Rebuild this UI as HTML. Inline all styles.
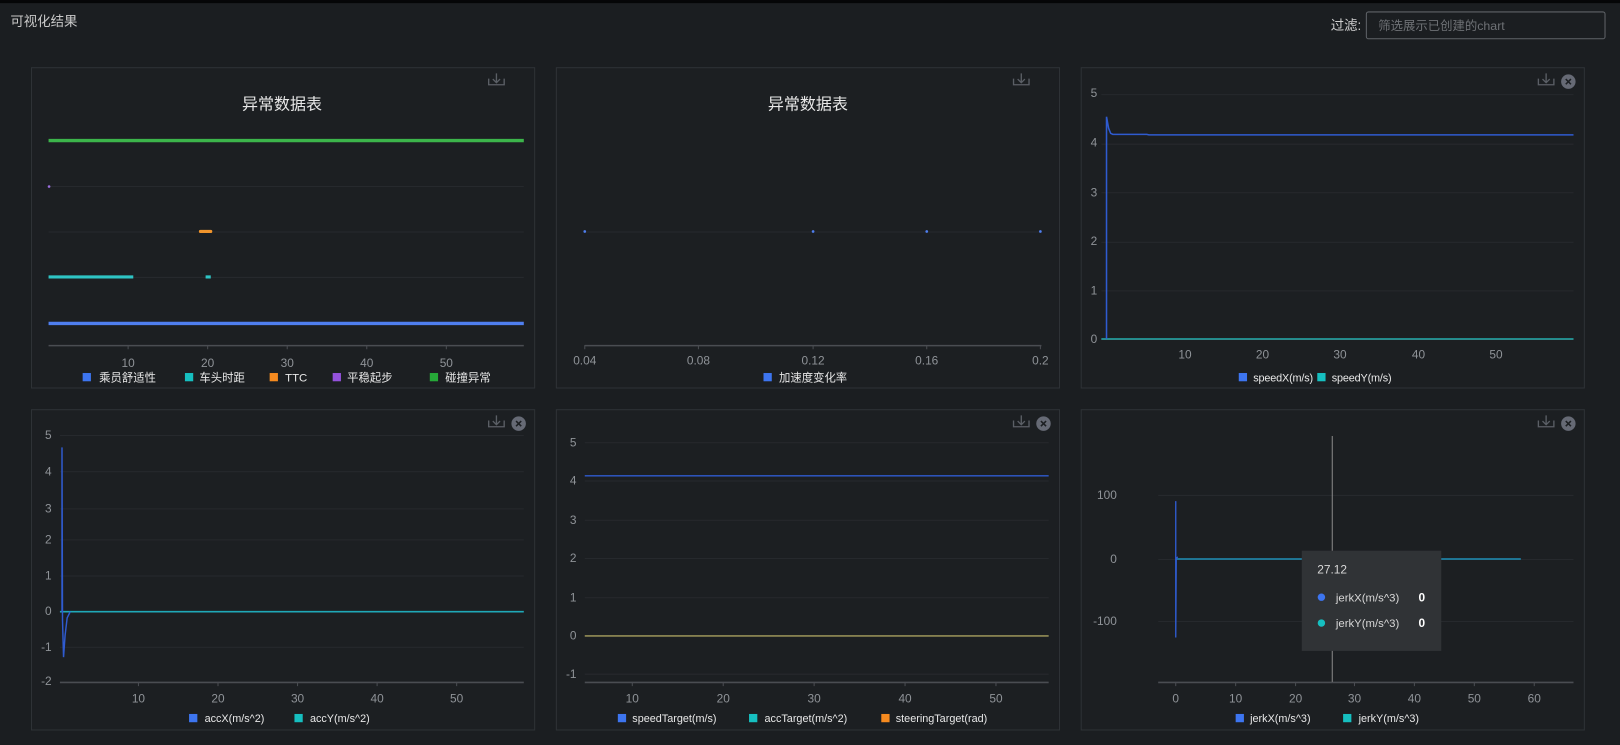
<!DOCTYPE html>
<html><head><meta charset="utf-8"><style>
html,body{margin:0;padding:0;background:#1b1e21;overflow:hidden}
svg{display:block;font-family:"Liberation Sans","Noto Sans CJK SC",sans-serif}
</style></head><body>
<svg width="1620" height="745" viewBox="0 0 1568 721" xmlns="http://www.w3.org/2000/svg">
<rect width="1568" height="721" fill="#1b1e21"/>
<rect width="1568" height="3" fill="#050607"/>
<text x="10" y="25" font-size="13" fill="#c8c8c8">可视化结果</text>
<text x="1288" y="29" font-size="13" fill="#d0d0d0">过滤:</text>
<rect x="1322.5" y="11.5" width="231" height="26" rx="2" fill="#1b1e21" stroke="#5f6368"/>
<text x="1334" y="29" font-size="12" fill="#6e7175">筛选展示已创建的chart</text>

<g fill="#1c1f22" stroke="#2e3236">
<rect x="30.5" y="65.5" width="487" height="310"/>
<rect x="538.5" y="65.5" width="487" height="310"/>
<rect x="1046.5" y="65.5" width="487" height="310"/>
<rect x="30.5" y="396.5" width="487" height="310"/>
<rect x="538.5" y="396.5" width="487" height="310"/>
<rect x="1046.5" y="396.5" width="487" height="310"/>
</g>

<defs>
<g id="dl" fill="none" stroke="#5b5f66" stroke-width="1.3"><path d="M0 5v6h15V5M7.5 0v9M4 5.5l3.5 3.5 3.5-3.5"/></g>
<g id="cl"><circle cx="0" cy="0" r="7" fill="#666a75"/><path d="M-2.5-2.5l5 5M2.5-2.5l-5 5" stroke="#1c1f22" stroke-width="1.5"/></g>
</defs>
<use href="#dl" x="473" y="71"/>
<use href="#dl" x="981" y="71"/>
<use href="#dl" x="1489" y="71"/><use href="#cl" x="1518" y="79"/>
<use href="#dl" x="473" y="402"/><use href="#cl" x="502" y="410"/>
<use href="#dl" x="981" y="402"/><use href="#cl" x="1010" y="410"/>
<use href="#dl" x="1489" y="402"/><use href="#cl" x="1518" y="410"/>

<g font-size="11.5" fill="#8f9398">
<!-- P1 -->
<text x="273" y="106" font-size="15.5" fill="#e8e8e8" text-anchor="middle">异常数据表</text>
<g stroke="#26292d"><path d="M47 180.5h460M47 224.5h460M47 268.5h460"/></g>
<path d="M47 334.5h460" stroke="#4a4d52" stroke-width="1.5"/>
<g stroke="#4a4d52"><path d="M124 334v4M201 334v4M278 334v4M355 334v4M432 334v4"/></g>
<path d="M47 136h460" stroke="#3cb44b" stroke-width="3.2"/>
<circle cx="47.5" cy="180.5" r="1.3" fill="#9b6fe0"/>
<path d="M194 224h10" stroke="#f0942c" stroke-width="3" stroke-linecap="round"/>
<path d="M47 268h82M199 268h5" stroke="#2ec4c4" stroke-width="3"/>
<path d="M47 313h460" stroke="#4f7ff0" stroke-width="3.2"/>
<g text-anchor="middle"><text x="124" y="355">10</text><text x="201" y="355">20</text><text x="278" y="355">30</text><text x="355" y="355">40</text><text x="432" y="355">50</text></g>
<g fill="#e8e8e8" font-size="11">
<rect x="80" y="361" width="8" height="8" fill="#3d75f0"/><text x="96" y="369">乘员舒适性</text>
<rect x="179" y="361" width="8" height="8" fill="#16bfc0"/><text x="193" y="369">车头时距</text>
<rect x="261" y="361" width="8" height="8" fill="#f58a1f"/><text x="276" y="369">TTC</text>
<rect x="322" y="361" width="8" height="8" fill="#9452dc"/><text x="336" y="369">平稳起步</text>
<rect x="416" y="361" width="8" height="8" fill="#26a838"/><text x="431" y="369">碰撞异常</text>
</g>

<!-- P2 -->
<text x="782" y="106" font-size="15.5" fill="#e8e8e8" text-anchor="middle">异常数据表</text>
<path d="M566 224.5h442" stroke="#26292d"/>
<path d="M566 334.5h442" stroke="#4a4d52" stroke-width="1.5"/>
<g stroke="#4a4d52"><path d="M566 334v4M676 334v4M787 334v4M897 334v4M1007 334v4"/></g>
<g fill="#4f7ff0"><circle cx="566" cy="224" r="1.3"/><circle cx="787" cy="224" r="1.3"/><circle cx="897" cy="224" r="1.3"/><circle cx="1007" cy="224" r="1.3"/></g>
<g text-anchor="middle"><text x="566" y="353">0.04</text><text x="676" y="353">0.08</text><text x="787" y="353">0.12</text><text x="897" y="353">0.16</text><text x="1007" y="353">0.2</text></g>
<rect x="739" y="361" width="8" height="8" fill="#3d75f0"/><text x="754" y="369" fill="#e8e8e8" font-size="11">加速度变化率</text>

<!-- P3 -->
<g stroke="#26292d"><path d="M1066 91.5h457M1066 139.5h457M1066 186.5h457M1066 234.5h457M1066 281.5h457"/></g>
<g text-anchor="end"><text x="1062" y="94">5</text><text x="1062" y="142">4</text><text x="1062" y="190">3</text><text x="1062" y="237">2</text><text x="1062" y="285">1</text><text x="1062" y="332">0</text></g>
<path d="M1066 328.5h457" stroke="#4a4d52"/>
<path d="M1066 328h457" stroke="#1fb0b0" stroke-width="1.3"/>
<path d="M1071 328V113L1073 124L1075 129L1077 130H1110L1112 130.5H1523" fill="none" stroke="#2f5bd0" stroke-width="1.5"/>
<g text-anchor="middle"><text x="1147" y="347">10</text><text x="1222" y="347">20</text><text x="1297" y="347">30</text><text x="1373" y="347">40</text><text x="1448" y="347">50</text></g>
<g fill="#e8e8e8" font-size="10.5"><rect x="1199" y="361" width="8" height="8" fill="#3d75f0"/><text x="1213" y="369" textLength="58">speedX(m/s)</text>
<rect x="1275" y="361" width="8" height="8" fill="#16bfc0"/><text x="1289" y="369" textLength="58">speedY(m/s)</text></g>

<!-- P4 -->
<g stroke="#26292d"><path d="M58 421.5h449M58 456.5h449M58 492.5h449M58 522.5h449M58 557.5h449M58 626.5h449"/></g>
<g text-anchor="end"><text x="50" y="425">5</text><text x="50" y="460">4</text><text x="50" y="496">3</text><text x="50" y="526">2</text><text x="50" y="561">1</text><text x="50" y="595">0</text><text x="50" y="630">-1</text><text x="50" y="663">-2</text></g>
<path d="M58 660.5h449" stroke="#4a4d52" stroke-width="1.5"/>
<g stroke="#4a4d52"><path d="M134 660v4M211 660v4M288 660v4M365 660v4M442 660v4"/></g>
<path d="M58 592h449" stroke="#1fa8b8" stroke-width="1.5"/>
<path d="M60 592V433L60.5 600L61.5 636L63 615L65 598L68 592" fill="none" stroke="#2f5bd0" stroke-width="1.4"/>
<g text-anchor="middle"><text x="134" y="680">10</text><text x="211" y="680">20</text><text x="288" y="680">30</text><text x="365" y="680">40</text><text x="442" y="680">50</text></g>
<g fill="#e8e8e8" font-size="10.5"><rect x="183" y="691" width="8" height="8" fill="#3d75f0"/><text x="198" y="699">accX(m/s^2)</text>
<rect x="285" y="691" width="8" height="8" fill="#16bfc0"/><text x="300" y="699">accY(m/s^2)</text></g>

<!-- P5 -->
<g stroke="#26292d"><path d="M566 428.5h449M566 465.5h449M566 503.5h449M566 540.5h449M566 578.5h449M566 652.5h449"/></g>
<g text-anchor="end"><text x="558" y="432">5</text><text x="558" y="469">4</text><text x="558" y="507">3</text><text x="558" y="544">2</text><text x="558" y="582">1</text><text x="558" y="619">0</text><text x="558" y="656">-1</text></g>
<path d="M566 660.5h449" stroke="#4a4d52" stroke-width="1.5"/>
<g stroke="#4a4d52"><path d="M612 660v4M700 660v4M788 660v4M876 660v4M964 660v4"/></g>
<path d="M566 460.5h449" stroke="#2f5bd0" stroke-width="1.4"/>
<path d="M566 615.5h449" stroke="#a8a060" stroke-width="1.4"/>
<g text-anchor="middle"><text x="612" y="680">10</text><text x="700" y="680">20</text><text x="788" y="680">30</text><text x="876" y="680">40</text><text x="964" y="680">50</text></g>
<g fill="#e8e8e8" font-size="10.5"><rect x="598" y="691" width="8" height="8" fill="#3d75f0"/><text x="612" y="699">speedTarget(m/s)</text>
<rect x="725" y="691" width="8" height="8" fill="#16bfc0"/><text x="740" y="699">accTarget(m/s^2)</text>
<rect x="853" y="691" width="8" height="8" fill="#f58a1f"/><text x="867" y="699">steeringTarget(rad)</text></g>

<!-- P6 -->
<g stroke="#26292d"><path d="M1121 479.5h402M1121 541.5h402M1121 601.5h402"/></g>
<g text-anchor="end"><text x="1081" y="483">100</text><text x="1081" y="545">0</text><text x="1081" y="605">-100</text></g>
<path d="M1121 660.5h402" stroke="#4a4d52" stroke-width="1.5"/>
<g stroke="#4a4d52"><path d="M1138 660v4M1196 660v4M1254 660v4M1311 660v4M1369 660v4M1427 660v4M1485 660v4"/></g>
<path d="M1138 541h334" stroke="#1f8fb8" stroke-width="1.5"/>
<path d="M1138 485V617L1138.5 540L1140 539" fill="none" stroke="#2f5bd0" stroke-width="1.3"/>
<path d="M1289.5 422V660" stroke="#888" stroke-width="1"/>
<g text-anchor="middle"><text x="1138" y="680">0</text><text x="1196" y="680">10</text><text x="1254" y="680">20</text><text x="1311" y="680">30</text><text x="1369" y="680">40</text><text x="1427" y="680">50</text><text x="1485" y="680">60</text></g>
<g fill="#e8e8e8" font-size="10.5"><rect x="1196" y="691" width="8" height="8" fill="#3d75f0"/><text x="1210" y="699">jerkX(m/s^3)</text>
<rect x="1300" y="691" width="8" height="8" fill="#16bfc0"/><text x="1315" y="699">jerkY(m/s^3)</text></g>
<rect x="1260" y="533" width="135" height="97" fill="#303336"/>
<text x="1275" y="555" font-size="11.5" fill="#d8d8d8">27.12</text>
<circle cx="1279" cy="578" r="3.6" fill="#3d75f0"/><text x="1293" y="582" font-size="11" fill="#d8d8d8">jerkX(m/s^3)</text><text x="1373" y="582" font-size="11.5" fill="#fff" font-weight="bold">0</text>
<circle cx="1279" cy="603" r="3.6" fill="#16bfc0"/><text x="1293" y="607" font-size="11" fill="#d8d8d8">jerkY(m/s^3)</text><text x="1373" y="607" font-size="11.5" fill="#fff" font-weight="bold">0</text>
</g>
</svg>
</body></html>
